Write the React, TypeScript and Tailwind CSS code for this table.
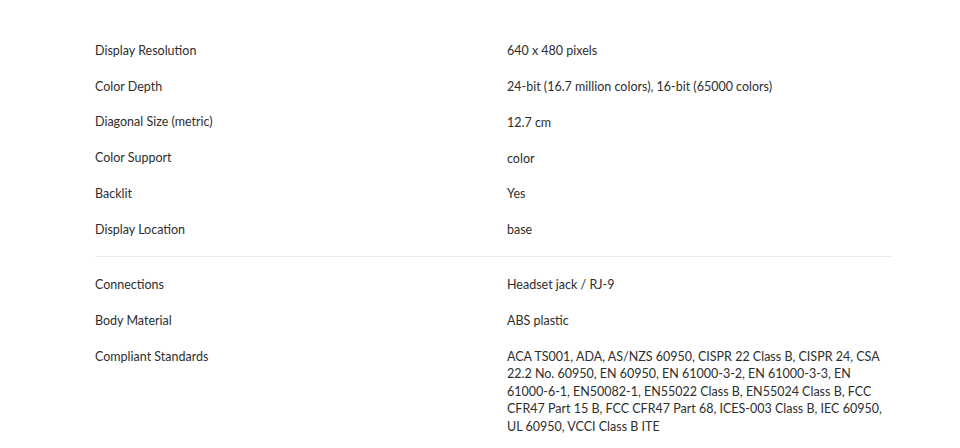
import React from "react";

const groups: [string, string][][] = [
  [
    ["Display Resolution", "640 x 480 pixels"],
    ["Color Depth", "24-bit (16.7 million colors), 16-bit (65000 colors)"],
    ["Diagonal Size (metric)", "12.7 cm"],
    ["Color Support", "color"],
    ["Backlit", "Yes"],
    ["Display Location", "base"],
  ],
  [
    ["Connections", "Headset jack / RJ-9"],
    ["Body Material", "ABS plastic"],
    [
      "Compliant Standards",
      "ACA TS001, ADA, AS/NZS 60950, CISPR 22 Class B, CISPR 24, CSA 22.2 No. 60950, EN 60950, EN 61000-3-2, EN 61000-3-3, EN 61000-6-1, EN50082-1, EN55022 Class B, EN55024 Class B, FCC CFR47 Part 15 B, FCC CFR47 Part 68, ICES-003 Class B, IEC 60950, UL 60950, VCCI Class B ITE",
    ],
  ],
];

export default function App() {
  return (
    <div
      className="w-[960px] h-[448px] overflow-hidden bg-white text-[#2e2e2e] text-[12.5px] leading-[18px]"
      style={{ fontFamily: "Lato, 'Liberation Sans', sans-serif" }}
    >
      <div className="ml-[95px] w-[797px] pt-[33px]">
        {groups.map((g, gi) => (
          <div
            key={gi}
            className={gi === 0 ? "border-b border-[#ebebeb] pb-[8.5px]" : "pt-[10px]"}
          >
            {g.map(([k, v]) => (
              <div key={k} className="flex py-[8.9px]">
                <div className="w-[412px] shrink-0">{k}</div>
                <div className="w-[385px] leading-[17.4px] pt-[0.3px]">{v}</div>
              </div>
            ))}
          </div>
        ))}
      </div>
    </div>
  );
}
